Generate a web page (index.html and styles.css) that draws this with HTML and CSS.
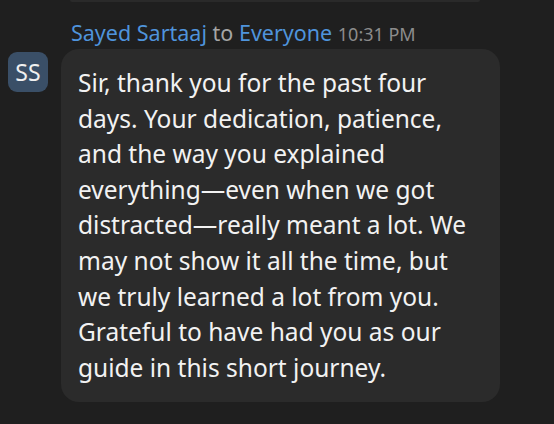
FILE: index.html
```html
<!DOCTYPE html>
<html lang="en">
<head>
    <meta charset="UTF-8">
    <title>Chat</title>
    <link rel="stylesheet" href="styles.css">
</head>
<body>
    <div class="chat">
        <div class="prev-bubble"></div>
        <div class="message">
            <div class="meta">
                <span class="name">Sayed Sartaaj</span>
                <span class="to">to</span>
                <span class="name">Everyone</span>
                <span class="time">10:31 PM</span>
            </div>
            <div class="row">
                <div class="avatar">SS</div>
                <div class="bubble">Sir, thank you for the past four days. Your dedication, patience, and the way you explained everything—even when we got distracted—really meant a lot. We may not show it all the time, but we truly learned a lot from you. Grateful to have had you as our guide in this short journey.</div>
            </div>
        </div>
    </div>
</body>
</html>
```
FILE: styles.css
```css
/* General */
body {
    margin: 0;
    background: #1f1f1f;
    font-family: 'Noto Sans', 'Open Sans', sans-serif;
    color: #f2f2f2;
}

.chat {
    height: 424px;
    overflow: hidden;
}

.prev-bubble {
    margin-left: 70px;
    width: 410px;
    height: 2px;
    background: #2a2a2a;
    border-radius: 0 0 6px 6px;
}

.message {
    padding-top: 17px;
}

.meta {
    margin-left: 71px;
    font-size: 21.5px;
    line-height: 28px;
    height: 30px;
    white-space: nowrap;
}

.name {
    color: #4f94dc;
}

.to {
    color: #a6a6a6;
}

.time {
    color: #8c8c8c;
    font-size: 18px;
}

.row {
    display: flex;
    align-items: flex-start;
    gap: 13px;
    padding-left: 8px;
}

.avatar {
    flex: none;
    width: 40px;
    height: 40px;
    margin-top: 3px;
    border-radius: 9px;
    background: #3a4f67;
    color: #f0f0f0;
    font-size: 23px;
    display: flex;
    align-items: center;
    justify-content: center;
}

.bubble {
    width: 400px;
    padding: 16px 22px 17px 17px;
    background: #2b2b2b;
    border-radius: 18px;
    font-size: 24.5px;
    line-height: 35.6px;
}
```
